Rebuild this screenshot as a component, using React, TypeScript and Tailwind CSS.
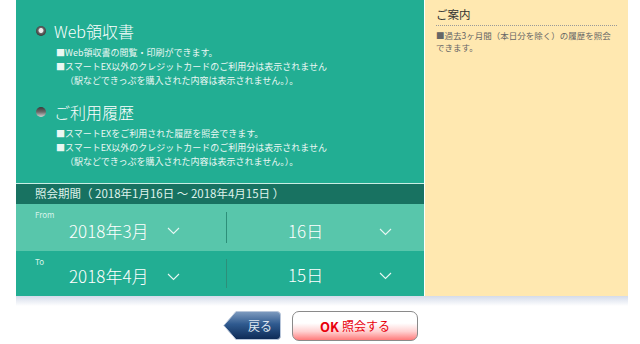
import React from "react";

// ── Small pieces ─────────────────────────────────────────────

function RadioDot({ selected }: { selected: boolean }) {
  return selected ? (
    <span className="w-[10px] h-[10px] rounded-full bg-[radial-gradient(circle_at_50%_45%,#f2f2f2_0%,#e6e6e6_28%,#6a6a6a_38%,#3c3c3c_70%,#8a8a8a_100%)] shrink-0" />
  ) : (
    <span className="w-[10px] h-[10px] rounded-full bg-[linear-gradient(180deg,#3a3a3a_0%,#6b6b6b_50%,#d4d4d4_100%)] shrink-0" />
  );
}

function Chevron() {
  return (
    <svg width="13" height="8" viewBox="0 0 13 8" className="shrink-0">
      <path d="M1 1 L6.5 6.5 L12 1" fill="none" stroke="#e8f7f3" strokeWidth="1.1" />
    </svg>
  );
}

function Bullet({ lines }: { lines: string[] }) {
  return (
    <div className="flex">
      <span className="w-[9px] shrink-0">■</span>
      <div>
        {lines.map((l) => (
          <div key={l}>{l}</div>
        ))}
      </div>
    </div>
  );
}

function Section({ title, selected, items }: { title: string; selected: boolean; items: string[][] }) {
  return (
    <div>
      <div className="flex items-center h-[22px] gap-[8px]">
        <RadioDot selected={selected} />
        <span className="text-[16px] leading-none font-light text-white">{title}</span>
      </div>
      <div className="pl-[20px] mt-[4px] text-[9px] leading-[14px] text-[#eaf7f3]">
        {items.map((it) => (
          <Bullet key={it[0]} lines={it} />
        ))}
      </div>
    </div>
  );
}

// per-row vertical offsets (rows are not the same height in the original)
const ROW_STYLE = {
  from: { row: "h-[47px] bg-[#58c6ab]", left: "pb-[10px]", right: "pt-[6px]" },
  to: { row: "h-[45px] bg-[#22ae93]", left: "pb-[11px]", right: "pt-[2px]" },
};

function DateRow({ label, month, day, kind }: { label: string; month: string; day: string; kind: "from" | "to" }) {
  const s = ROW_STYLE[kind];
  return (
    <div className={`flex ${s.row}`}>
      <div className="w-[210px] flex flex-col">
        <span className="pl-[19px] pt-[6px] text-[8px] leading-[9px] text-[#d6f3ea]">{label}</span>
        <div className={`flex-1 flex items-center pl-[53px] ${s.left}`}>
          <span className="text-[17px] leading-none font-light text-white">{month}</span>
          <span className="ml-[19px] mt-[2px]">
            <Chevron />
          </span>
        </div>
      </div>
      <div className="w-px bg-[#2d8f79] my-[8px]" />
      <div className={`flex-1 flex items-center pl-[61px] ${s.right}`}>
        <span className="text-[17px] leading-none font-light text-white">{day}</span>
        <span className="ml-[56px] mt-[2px]">
          <Chevron />
        </span>
      </div>
    </div>
  );
}

// ── Page ─────────────────────────────────────────────────────

export default function App() {
  return (
    <div
      className="w-[640px] h-[344px] bg-white overflow-hidden"
      style={{ fontFamily: '"Noto Sans CJK JP", "Noto Sans", sans-serif' }}
    >
      <div className="ml-[16px] w-[612px]">
        <div className="flex h-[296px]">
          {/* Green panel */}
          <div className="w-[408px] flex flex-col bg-[#22ae93]">
            <div className="h-[183px] pt-[20px] pl-[20px]">
              <Section
                title="Web領収書"
                selected
                items={[
                  ["Web領収書の閲覧・印刷ができます。"],
                  ["スマートEX以外のクレジットカードのご利用分は表示されません", "（駅などできっぷを購入された内容は表示されません。）。"],
                ]}
              />
              <div className="mt-[13px]">
                <Section
                  title="ご利用履歴"
                  selected={false}
                  items={[
                    ["スマートEXをご利用された履歴を照会できます。"],
                    ["スマートEX以外のクレジットカードのご利用分は表示されません", "（駅などできっぷを購入された内容は表示されません。）。"],
                  ]}
                />
              </div>
            </div>
            <div className="h-px bg-[#c9eee4]" />
            <div className="h-[20px] flex items-center pl-[19px] bg-[#187261] text-[11.5px] leading-none text-[#dff2ec]">
              照会期間（ 2018年1月16日 ～ 2018年4月15日 ）
            </div>
            <DateRow label="From" month="2018年3月" day="16日" kind="from" />
            <DateRow label="To" month="2018年4月" day="15日" kind="to" />
          </div>

          <div className="w-px bg-white" />

          {/* Guide panel */}
          <div className="flex-1 bg-[#ffe8b0] pt-[6px] pl-[11px] pr-[11px]">
            <div className="text-[11.5px] leading-[16px] text-[#333]">ご案内</div>
            <div className="mt-[3px] border-t border-dotted border-[#999]" />
            <div className="mt-[3px] text-[8.5px] leading-[12px] text-[#666]">
              ■過去3ヶ月間（本日分を除く）の履歴を照会
              <br />
              できます。
            </div>
          </div>
        </div>
        <div className="h-[10px] bg-[linear-gradient(180deg,#d4dbea_0%,#ffffff_100%)]" />
      </div>

      {/* Buttons */}
      <div className="flex justify-center gap-[11px] mt-[5px] pl-[1px]">
        <button className="relative w-[58px] h-[29px] flex items-center justify-center">
          <svg width="58" height="29" viewBox="0 0 58 29" className="absolute inset-0">
            <defs>
              <linearGradient id="back" x1="0" y1="0" x2="0" y2="1">
                <stop offset="0" stopColor="#7f9cc0" />
                <stop offset="0.45" stopColor="#2f5a8f" />
                <stop offset="1" stopColor="#0d2a55" />
              </linearGradient>
            </defs>
            <path
              d="M13 0.5 H54 Q57.5 0.5 57.5 4 V25 Q57.5 28.5 54 28.5 H13 L0.8 14.5 Z"
              fill="url(#back)"
              stroke="#b8c6da"
              strokeWidth="1"
            />
          </svg>
          <span className="relative pl-[16px] text-[12px] leading-none text-[#dfe6f0]">戻る</span>
        </button>
        <button className="w-[126px] h-[30px] rounded-[7px] border border-[#8a8a8a] bg-[linear-gradient(180deg,#ffffff_0%,#ffffff_40%,#ffd0d0_70%,#ff7b7b_100%)] flex items-center justify-center gap-[3px]">
          <span className="text-[13px] font-bold leading-none text-[#e8000c]">OK</span>
          <span className="text-[12px] leading-none text-[#e8000c]">照会する</span>
        </button>
      </div>
    </div>
  );
}
